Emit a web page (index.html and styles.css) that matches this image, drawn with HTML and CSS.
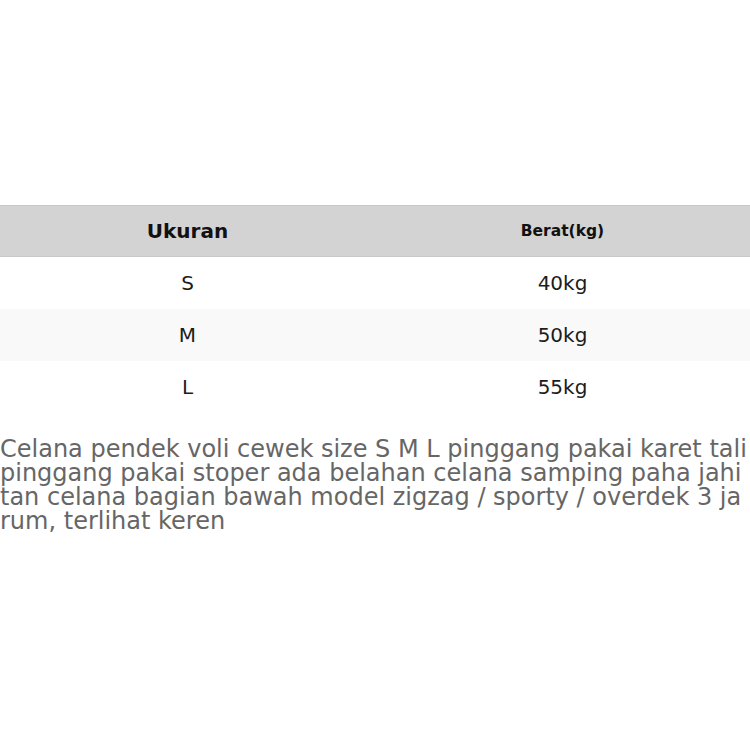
FILE: index.html
```html
<!DOCTYPE html>
<html>
<head>
<meta charset="utf-8">
<link rel="stylesheet" href="styles.css">
</head>
<body>
<main class="page">
  <table class="size-table">
    <thead>
      <tr>
        <th class="col-size">Ukuran</th>
        <th class="col-weight">Berat(kg)</th>
      </tr>
    </thead>
    <tbody>
      <tr><td>S</td><td>40kg</td></tr>
      <tr class="striped"><td>M</td><td>50kg</td></tr>
      <tr><td>L</td><td>55kg</td></tr>
    </tbody>
  </table>
  <p class="desc">Celana pendek voli cewek size S M L pinggang pakai karet tali pinggang pakai stoper ada belahan celana samping paha jahitan celana bagian bawah model zigzag / sporty / overdek 3 jarum, terlihat keren</p>
</main>
</body>
</html>
```
FILE: styles.css
```css
html, body {
  margin: 0;
  padding: 0;
  background: #ffffff;
}
.page {
  padding-top: 205px;
  font-family: "DejaVu Sans", sans-serif;
}
.size-table {
  width: 750px;
  border-collapse: collapse;
  table-layout: fixed;
}
.size-table th {
  background: #d3d3d3;
  color: #111;
  font-weight: bold;
  height: 50px;
  padding: 0;
  text-align: center;
  border-top: 1px solid #c8c8c8;
  border-bottom: 1px solid #c8c8c8;
}
.col-size {
  font-size: 20px;
}
.col-weight {
  font-size: 15.5px;
}
.size-table td {
  height: 52px;
  padding: 0;
  text-align: center;
  font-size: 20px;
  color: #1c1c1c;
}
.striped td {
  background: #f9f9f9;
}
.desc {
  margin: 24px 0 0 0;
  font-size: 24px;
  line-height: 24px;
  color: #666666;
  word-break: break-all;
}
```
